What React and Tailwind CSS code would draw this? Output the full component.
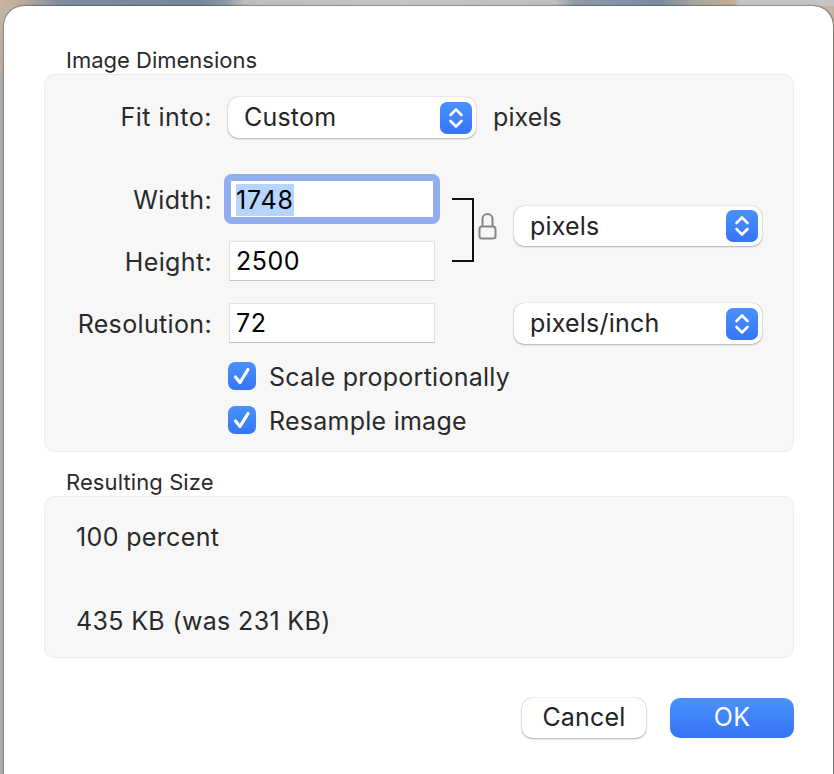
import React from 'react';

const font = "font-['Inter','Liberation_Sans',sans-serif]";

const Stepper = () => (
  <span className="flex h-8 w-8 shrink-0 items-center justify-center rounded-[7px] bg-gradient-to-b from-[#4b91fb] to-[#3475f6]">
    <svg width="18" height="24" viewBox="0 0 18 24" fill="none" stroke="white" strokeWidth="2.6" strokeLinecap="round" strokeLinejoin="round">
      <path d="M3.5 9 9 3.5 14.5 9" />
      <path d="M3.5 15 9 20.5 14.5 15" />
    </svg>
  </span>
);

const Select = ({ label, className }) => (
  <div className={`flex items-center justify-between rounded-[10px] bg-white pl-4 pr-[4px] shadow-[0_0_1px_rgba(0,0,0,0.35),0_1px_2px_rgba(0,0,0,0.25)] ${className}`}>
    <span className="text-[25px] leading-none tracking-[0.2px] text-[#242424]">{label}</span>
    <Stepper />
  </div>
);

const Field = ({ value, focused }) => (
  focused ? (
    <div className="flex h-10 w-[206px] items-center rounded-[3px] bg-white pl-[7px] shadow-[inset_0_0_0_2px_#8fadef,0_0_0_5px_#8fadef]">
      <span className="mt-[2px] bg-[#b5d5ff] py-[2px] text-[25px] leading-[28px] tracking-[0.8px] text-black">{value}</span>
    </div>
  ) : (
    <div className="flex h-10 w-[206px] items-center border border-[#e2e2e2] border-b-[#c4c4c4] bg-white pl-[6px] text-[25px] leading-none tracking-[0.5px] text-black">
      {value}
    </div>
  )
);

const Label = ({ children }) => (
  <div className="flex h-10 items-center justify-end pt-[2px] text-[25px] leading-none text-[#2a2a2a]">{children}</div>
);

const Check = ({ label }) => (
  <div className="flex h-7 items-center gap-[13px]">
    <span className="flex h-7 w-7 items-center justify-center rounded-[7px] bg-gradient-to-b from-[#4b91fb] to-[#3475f6]">
      <svg width="20" height="20" viewBox="0 0 20 20" fill="none" stroke="white" strokeWidth="3.2" strokeLinecap="round" strokeLinejoin="round">
        <path d="M3.5 11 8 16.5 16 3.5" />
      </svg>
    </span>
    <span className="pt-[2px] text-[25px] leading-none tracking-[0.25px] text-[#2a2a2a]">{label}</span>
  </div>
);

export default function App() {
  return (
    <div className={`h-[774px] w-[834px] overflow-hidden tracking-[0.35px] bg-[linear-gradient(180deg,#c4b5a5_0px,#b8ab9d_70px,#a9a9a9_78px,#a9a9a9_774px)] ${font}`}>
      <div className="h-[6px] w-full bg-[linear-gradient(90deg,#c9b59f_0px,#b5a99a_25px,#7f8d9d_60px,#76879b_200px,#8a96a3_225px,#bdbdbd_245px,#c6c6c4_400px,#bfbfbd_555px,#8e9aa8_575px,#7b8b9e_660px,#a8a59c_695px,#c4ae96_735px,#c4c4c4_739px)]" />
      <div className="ml-[4px] h-[790px] w-[829px] rounded-[20px] bg-white px-[40px] pt-[42px] shadow-[0_-1px_1px_rgba(0,0,0,0.25),1px_0_1px_rgba(0,0,0,0.3),-1px_0_1px_rgba(0,0,0,0.2)]">
        <div className="ml-[22px] text-[22px] leading-[24px] tracking-normal text-[#2a2a2a]">Image Dimensions</div>
        <div className="mt-[2px] w-[750px] rounded-[10px] border border-[#ececec] bg-[#f7f7f7] pb-[17px] pt-[22px]">
          <div className="flex items-center">
            <div className="w-[167px] text-right text-[25px] leading-none tracking-[0.5px] text-[#2a2a2a]">Fit into:</div>
            <Select label="Custom" className="ml-[16px] h-[41px] w-[248px]" />
            <span className="ml-[17px] text-[25px] leading-none tracking-[0.1px] text-[#2a2a2a]">pixels</span>
          </div>

          <div className="mt-[41px] grid grid-cols-[167px_223px_79px_248px] grid-rows-[40px_40px_40px] gap-y-[22px]">
            <Label>Width:</Label>
            <div className="ml-[17px]"><Field value="1748" focused /></div>
            <div className="row-span-2 ml-[17px] flex items-center">
              <svg width="45" height="64" viewBox="0 0 45 64" fill="none" stroke="#111" strokeWidth="2">
                <path d="M0 1h21v62H0" />
                <g stroke="#868686">
                  <rect x="27.5" y="28.5" width="16" height="12" rx="2.5" />
                  <path d="M30.5 28v-7a5 5 0 0 1 10 0v7" />
                </g>
              </svg>
            </div>
            <div className="row-span-2 flex items-center pb-[8px]">
              <Select label="pixels" className="h-10 w-[248px]" />
            </div>
            <Label>Height:</Label>
            <div className="ml-[17px]"><Field value="2500" /></div>
            <Label>Resolution:</Label>
            <div className="ml-[17px]"><Field value="72" /></div>
            <div />
            <Select label="pixels/inch" className="h-[41px] w-[248px]" />
          </div>

          <div className="ml-[183px] mt-[19px] flex flex-col gap-4">
            <Check label="Scale proportionally" />
            <Check label="Resample image" />
          </div>
        </div>

        <div className="ml-[22px] mt-[18px] text-[22px] leading-[24px] tracking-[0.1px] text-[#2a2a2a]">Resulting Size</div>
        <div className="mt-[2px] flex h-[162px] w-[750px] flex-col justify-between rounded-[10px] border border-[#ececec] bg-[#f7f7f7] px-[31px] pb-[21px] pt-[25px] text-[25px] leading-[30px] text-[#2a2a2a]">
          <div>100 percent</div>
          <div>435 KB (was 231 KB)</div>
        </div>

        <div className="mt-[40px] flex w-[750px] justify-end gap-6">
          <button className="h-10 w-[124px] rounded-[10px] bg-white pb-[2px] text-[25px] leading-none tracking-[0.2px] text-[#242424] shadow-[0_0_1px_rgba(0,0,0,0.4),0_1px_2px_rgba(0,0,0,0.3)]">Cancel</button>
          <button className="h-10 w-[124px] rounded-[10px] bg-gradient-to-b from-[#4b91fb] to-[#3475f6] pb-[2px] text-[25px] leading-none text-white">OK</button>
        </div>
      </div>
    </div>
  );
}
